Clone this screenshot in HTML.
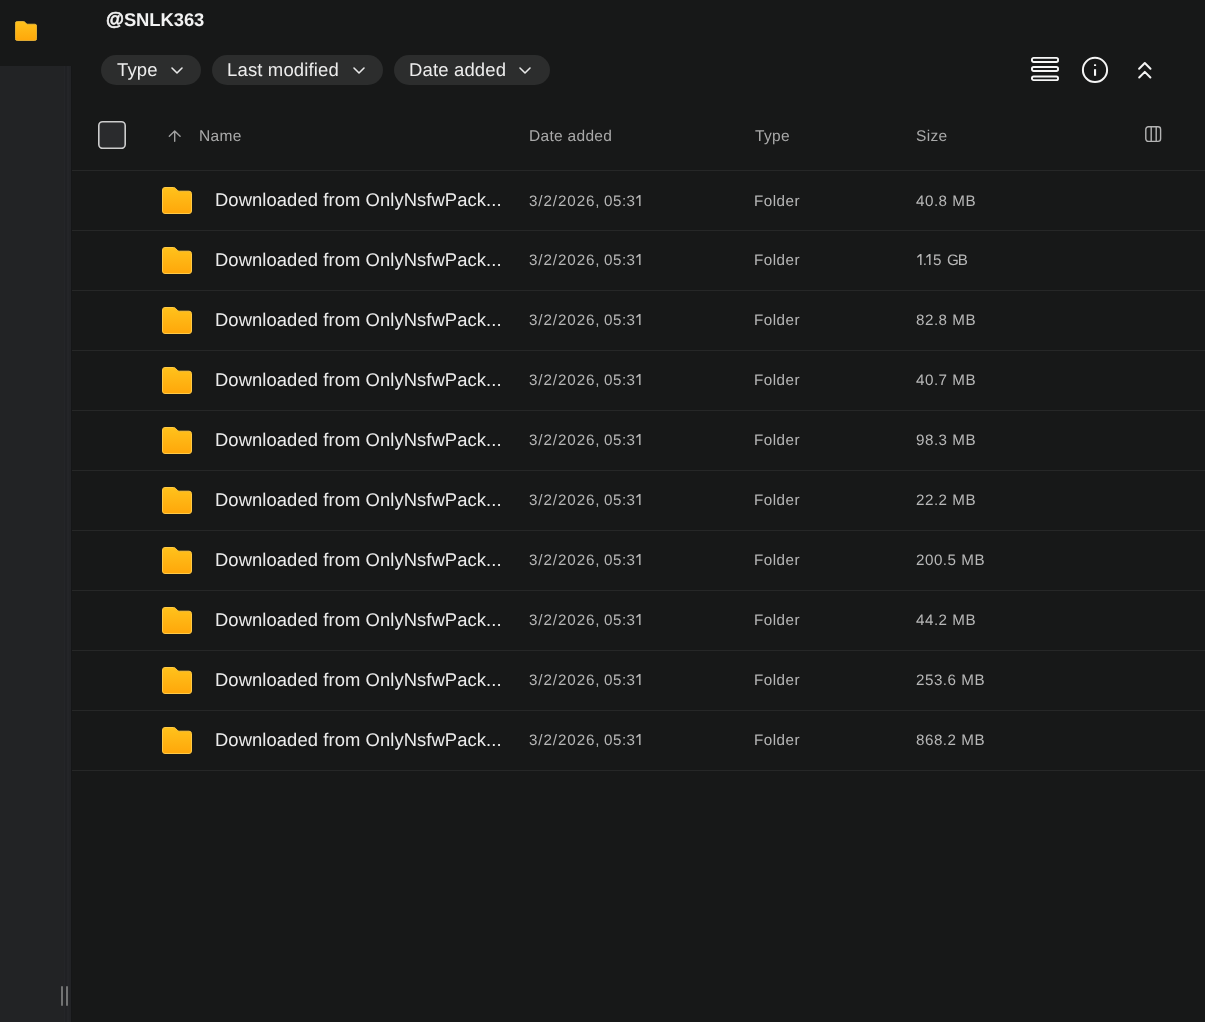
<!DOCTYPE html>
<html><head><meta charset="utf-8">
<style>
html,body{-webkit-font-smoothing:antialiased;text-rendering:geometricPrecision;margin:0;padding:0;width:1205px;height:1022px;overflow:hidden;background:#171818;font-family:"Liberation Sans",sans-serif;}
.a{position:absolute;white-space:nowrap;will-change:transform;}
#side{position:absolute;left:0;top:66px;width:71px;height:956px;background:#222325;}
#strip{position:absolute;left:64px;top:66px;width:7px;height:956px;background:#242528;}
.grip{position:absolute;top:986px;width:2.4px;height:20px;background:#727373;border-radius:1px;}
#title{left:105.5px;top:7.5px;font-size:18.4px;font-weight:bold;color:#f2f2f2;line-height:24px;letter-spacing:-0.05px;}
.chip{position:absolute;top:55px;height:30px;border-radius:15px;background:#2c2d2d;}
.chip span{will-change:transform;position:absolute;left:16px;top:0;line-height:30px;font-size:18.5px;letter-spacing:0.15px;color:#ececec;white-space:nowrap;}
.chip svg{position:absolute;top:12px;}
.hdr{font-size:15.5px;color:#a9a9a9;letter-spacing:0.3px;line-height:20px;top:127px;}
.sep{position:absolute;left:72px;width:1133px;height:1px;background:#262727;}
.name{left:214.8px;font-size:18.4px;color:#ececec;letter-spacing:0.08px;line-height:24px;}
.cell{font-size:15.2px;color:#b7b7b7;letter-spacing:0.5px;line-height:20px;}
.fold{position:absolute;left:162px;}
.one{vertical-align:baseline;}
</style></head><body>
<div id="side"></div>
<div id="strip"></div><div class="a" style="left:65px;top:66px;width:1.5px;height:956px;background:#202124"></div><div class="a" style="left:69px;top:66px;width:2px;height:956px;background:#222326"></div><div class="a" style="left:71px;top:66px;width:1px;height:956px;background:#151617"></div>
<div class="grip" style="left:61px"></div>
<div class="grip" style="left:66px"></div>
<svg class="a" style="left:15px;top:21px" width="22" height="20" viewBox="0 0 30 27">
<defs><linearGradient id="g0" x1="0" y1="0" x2="0" y2="1"><stop offset="0" stop-color="#FFC21C"/><stop offset="1" stop-color="#FFA70A"/></linearGradient></defs>
<path d="M3,0.5 H11.4 Q12.8,0.5 13.7,1.5 L15.3,3.3 Q16.1,4.2 17.3,4.2 H27 Q29.5,4.2 29.5,6.7 V24 Q29.5,26.5 27,26.5 H3 Q0.5,26.5 0.5,24 V3 Q0.5,0.5 3,0.5 Z" fill="url(#g0)" stroke="#FFC945" stroke-width="1"/>
</svg>
<div id="title" class="a"><span style="-webkit-text-stroke:0.6px #f2f2f2;position:relative;top:-1px">@</span>SNLK363</div>
<div class="chip" style="left:101px;width:100px"><span>Type</span><svg style="left:70px" width="12" height="7" viewBox="0 0 12 7"><path d="M1,1 L6,6 L11,1" fill="none" stroke="#e8e8e8" stroke-width="1.55" stroke-linecap="round" stroke-linejoin="round"/></svg></div>
<div class="chip" style="left:212px;width:171px"><span style="left:15px">Last modified</span><svg style="left:141px" width="12" height="7" viewBox="0 0 12 7"><path d="M1,1 L6,6 L11,1" fill="none" stroke="#e8e8e8" stroke-width="1.55" stroke-linecap="round" stroke-linejoin="round"/></svg></div>
<div class="chip" style="left:394px;width:156px"><span style="left:14.5px">Date added</span><svg style="left:125px" width="12" height="7" viewBox="0 0 12 7"><path d="M1,1 L6,6 L11,1" fill="none" stroke="#e8e8e8" stroke-width="1.55" stroke-linecap="round" stroke-linejoin="round"/></svg></div>
<svg class="a" style="left:1030px;top:56px" width="30" height="26" viewBox="0 0 30 26" fill="none" stroke="#f6f6f6" stroke-width="1.9">
<rect x="1.95" y="1.9" width="26.1" height="4.1" rx="1.7"/>
<rect x="1.95" y="11" width="26.1" height="4" rx="1.7"/>
<rect x="1.95" y="20.5" width="26.1" height="3.6" rx="1.7"/>
</svg>
<svg class="a" style="left:1081px;top:56px" width="28" height="28" viewBox="0 0 28 28" fill="none" stroke="#f6f6f6" stroke-width="2">
<circle cx="14" cy="13.9" r="12.1"/>
<line x1="14.05" y1="13.2" x2="14.05" y2="19.8" stroke-width="2.1"/>
<line x1="14.05" y1="8.3" x2="14.05" y2="10" stroke-width="2.1"/>
</svg>
<svg class="a" style="left:1136px;top:60px" width="18" height="20" viewBox="0 0 18 20" fill="none" stroke="#f4f4f4" stroke-width="2" stroke-linecap="round" stroke-linejoin="round">
<path d="M3.1,8.7 L8.8,3 L14.5,8.7"/>
<path d="M3.2,17.5 L8.8,11.9 L14.4,17.5"/>
</svg>
<svg class="a" style="left:98px;top:121px" width="28" height="28" viewBox="0 0 28 28"><rect x="0.8" y="0.8" width="26.4" height="26.6" rx="3.8" fill="#2a2b2d" stroke="#cdcdcd" stroke-width="1.6"/></svg>
<svg class="a" style="left:167px;top:129px" width="15" height="14" viewBox="0 0 15 14" fill="none" stroke="#a0a0a0" stroke-width="1.4" stroke-linecap="round" stroke-linejoin="round">
<path d="M7.7,12.3 V2.2 M2.3,7.3 L7.7,1.9 L13.1,7.3"/>
</svg>
<div class="a hdr" style="left:199px">Name</div>
<div class="a hdr" style="left:529px">Date added</div>
<div class="a hdr" style="left:755px">Type</div>
<div class="a hdr" style="left:916px">Size</div>
<svg class="a" style="left:1145px;top:126.3px" width="17" height="17" viewBox="0 0 17 17" fill="none" stroke="#b4b4b4" stroke-width="1.4">
<rect x="0.8" y="0.8" width="14.8" height="14.6" rx="2.6"/>
<line x1="6.2" y1="1" x2="6.2" y2="15.5"/>
<line x1="11.2" y1="1" x2="11.2" y2="15.5"/>
</svg>
<div class="sep" style="top:170px"></div>
<svg class="a fold" style="top:187px" width="30" height="27" viewBox="0 0 30 27"><path d="M3,0.5 H11.4 Q12.8,0.5 13.7,1.5 L15.3,3.3 Q16.1,4.2 17.3,4.2 H27 Q29.5,4.2 29.5,6.7 V24 Q29.5,26.5 27,26.5 H3 Q0.5,26.5 0.5,24 V3 Q0.5,0.5 3,0.5 Z" fill="url(#g0)" stroke="#FFC945" stroke-width="1"/></svg>
<div class="a name" style="top:188px">Downloaded from OnlyNsfwPack...</div>
<div class="a cell" style="left:529px;top:191.5px;letter-spacing:0.9px">3/2/2026,</div>
<div class="a cell" style="left:604px;top:191.5px">05:3<span style="margin-left:0px"></span><svg class="one" width="5" height="11" viewBox="0 0 5 11"><path d="M3.1,0 H4.55 V11 H3.1 V1.9 L0.35,3.9 V2.3 Z" fill="currentColor"/></svg></div>
<div class="a cell" style="left:754px;top:191.5px">Folder</div>
<div class="a cell" style="left:916px;top:191.5px">40.8 MB</div>
<div class="sep" style="top:230px"></div>
<svg class="a fold" style="top:247px" width="30" height="27" viewBox="0 0 30 27"><path d="M3,0.5 H11.4 Q12.8,0.5 13.7,1.5 L15.3,3.3 Q16.1,4.2 17.3,4.2 H27 Q29.5,4.2 29.5,6.7 V24 Q29.5,26.5 27,26.5 H3 Q0.5,26.5 0.5,24 V3 Q0.5,0.5 3,0.5 Z" fill="url(#g0)" stroke="#FFC945" stroke-width="1"/></svg>
<div class="a name" style="top:248px">Downloaded from OnlyNsfwPack...</div>
<div class="a cell" style="left:529px;top:250.5px;letter-spacing:0.9px">3/2/2026,</div>
<div class="a cell" style="left:604px;top:250.5px">05:3<span style="margin-left:0px"></span><svg class="one" width="5" height="11" viewBox="0 0 5 11"><path d="M3.1,0 H4.55 V11 H3.1 V1.9 L0.35,3.9 V2.3 Z" fill="currentColor"/></svg></div>
<div class="a cell" style="left:754px;top:250.5px">Folder</div>
<div class="a cell" style="left:916px;top:250.5px"><span style="margin-left:0.5px"></span><svg class="one" width="5" height="11" viewBox="0 0 5 11"><path d="M3.1,0 H4.55 V11 H3.1 V1.9 L0.35,3.9 V2.3 Z" fill="currentColor"/></svg><span style="margin-left:1.2px">.</span><span style="margin-left:-1.0px"></span><svg class="one" width="5" height="11" viewBox="0 0 5 11"><path d="M3.1,0 H4.55 V11 H3.1 V1.9 L0.35,3.9 V2.3 Z" fill="currentColor"/></svg><span style="margin-left:1.5px">5</span><span style="letter-spacing:0;margin-left:1px"> G</span><span style="margin-left:-1.1px">B</span></div>
<div class="sep" style="top:290px"></div>
<svg class="a fold" style="top:307px" width="30" height="27" viewBox="0 0 30 27"><path d="M3,0.5 H11.4 Q12.8,0.5 13.7,1.5 L15.3,3.3 Q16.1,4.2 17.3,4.2 H27 Q29.5,4.2 29.5,6.7 V24 Q29.5,26.5 27,26.5 H3 Q0.5,26.5 0.5,24 V3 Q0.5,0.5 3,0.5 Z" fill="url(#g0)" stroke="#FFC945" stroke-width="1"/></svg>
<div class="a name" style="top:308px">Downloaded from OnlyNsfwPack...</div>
<div class="a cell" style="left:529px;top:310.5px;letter-spacing:0.9px">3/2/2026,</div>
<div class="a cell" style="left:604px;top:310.5px">05:3<span style="margin-left:0px"></span><svg class="one" width="5" height="11" viewBox="0 0 5 11"><path d="M3.1,0 H4.55 V11 H3.1 V1.9 L0.35,3.9 V2.3 Z" fill="currentColor"/></svg></div>
<div class="a cell" style="left:754px;top:310.5px">Folder</div>
<div class="a cell" style="left:916px;top:310.5px">82.8 MB</div>
<div class="sep" style="top:350px"></div>
<svg class="a fold" style="top:367px" width="30" height="27" viewBox="0 0 30 27"><path d="M3,0.5 H11.4 Q12.8,0.5 13.7,1.5 L15.3,3.3 Q16.1,4.2 17.3,4.2 H27 Q29.5,4.2 29.5,6.7 V24 Q29.5,26.5 27,26.5 H3 Q0.5,26.5 0.5,24 V3 Q0.5,0.5 3,0.5 Z" fill="url(#g0)" stroke="#FFC945" stroke-width="1"/></svg>
<div class="a name" style="top:368px">Downloaded from OnlyNsfwPack...</div>
<div class="a cell" style="left:529px;top:370.5px;letter-spacing:0.9px">3/2/2026,</div>
<div class="a cell" style="left:604px;top:370.5px">05:3<span style="margin-left:0px"></span><svg class="one" width="5" height="11" viewBox="0 0 5 11"><path d="M3.1,0 H4.55 V11 H3.1 V1.9 L0.35,3.9 V2.3 Z" fill="currentColor"/></svg></div>
<div class="a cell" style="left:754px;top:370.5px">Folder</div>
<div class="a cell" style="left:916px;top:370.5px">40.7 MB</div>
<div class="sep" style="top:410px"></div>
<svg class="a fold" style="top:427px" width="30" height="27" viewBox="0 0 30 27"><path d="M3,0.5 H11.4 Q12.8,0.5 13.7,1.5 L15.3,3.3 Q16.1,4.2 17.3,4.2 H27 Q29.5,4.2 29.5,6.7 V24 Q29.5,26.5 27,26.5 H3 Q0.5,26.5 0.5,24 V3 Q0.5,0.5 3,0.5 Z" fill="url(#g0)" stroke="#FFC945" stroke-width="1"/></svg>
<div class="a name" style="top:428px">Downloaded from OnlyNsfwPack...</div>
<div class="a cell" style="left:529px;top:430.5px;letter-spacing:0.9px">3/2/2026,</div>
<div class="a cell" style="left:604px;top:430.5px">05:3<span style="margin-left:0px"></span><svg class="one" width="5" height="11" viewBox="0 0 5 11"><path d="M3.1,0 H4.55 V11 H3.1 V1.9 L0.35,3.9 V2.3 Z" fill="currentColor"/></svg></div>
<div class="a cell" style="left:754px;top:430.5px">Folder</div>
<div class="a cell" style="left:916px;top:430.5px">98.3 MB</div>
<div class="sep" style="top:470px"></div>
<svg class="a fold" style="top:487px" width="30" height="27" viewBox="0 0 30 27"><path d="M3,0.5 H11.4 Q12.8,0.5 13.7,1.5 L15.3,3.3 Q16.1,4.2 17.3,4.2 H27 Q29.5,4.2 29.5,6.7 V24 Q29.5,26.5 27,26.5 H3 Q0.5,26.5 0.5,24 V3 Q0.5,0.5 3,0.5 Z" fill="url(#g0)" stroke="#FFC945" stroke-width="1"/></svg>
<div class="a name" style="top:488px">Downloaded from OnlyNsfwPack...</div>
<div class="a cell" style="left:529px;top:490.5px;letter-spacing:0.9px">3/2/2026,</div>
<div class="a cell" style="left:604px;top:490.5px">05:3<span style="margin-left:0px"></span><svg class="one" width="5" height="11" viewBox="0 0 5 11"><path d="M3.1,0 H4.55 V11 H3.1 V1.9 L0.35,3.9 V2.3 Z" fill="currentColor"/></svg></div>
<div class="a cell" style="left:754px;top:490.5px">Folder</div>
<div class="a cell" style="left:916px;top:490.5px">22.2 MB</div>
<div class="sep" style="top:530px"></div>
<svg class="a fold" style="top:547px" width="30" height="27" viewBox="0 0 30 27"><path d="M3,0.5 H11.4 Q12.8,0.5 13.7,1.5 L15.3,3.3 Q16.1,4.2 17.3,4.2 H27 Q29.5,4.2 29.5,6.7 V24 Q29.5,26.5 27,26.5 H3 Q0.5,26.5 0.5,24 V3 Q0.5,0.5 3,0.5 Z" fill="url(#g0)" stroke="#FFC945" stroke-width="1"/></svg>
<div class="a name" style="top:548px">Downloaded from OnlyNsfwPack...</div>
<div class="a cell" style="left:529px;top:550.5px;letter-spacing:0.9px">3/2/2026,</div>
<div class="a cell" style="left:604px;top:550.5px">05:3<span style="margin-left:0px"></span><svg class="one" width="5" height="11" viewBox="0 0 5 11"><path d="M3.1,0 H4.55 V11 H3.1 V1.9 L0.35,3.9 V2.3 Z" fill="currentColor"/></svg></div>
<div class="a cell" style="left:754px;top:550.5px">Folder</div>
<div class="a cell" style="left:916px;top:550.5px">200.5 MB</div>
<div class="sep" style="top:590px"></div>
<svg class="a fold" style="top:607px" width="30" height="27" viewBox="0 0 30 27"><path d="M3,0.5 H11.4 Q12.8,0.5 13.7,1.5 L15.3,3.3 Q16.1,4.2 17.3,4.2 H27 Q29.5,4.2 29.5,6.7 V24 Q29.5,26.5 27,26.5 H3 Q0.5,26.5 0.5,24 V3 Q0.5,0.5 3,0.5 Z" fill="url(#g0)" stroke="#FFC945" stroke-width="1"/></svg>
<div class="a name" style="top:608px">Downloaded from OnlyNsfwPack...</div>
<div class="a cell" style="left:529px;top:610.5px;letter-spacing:0.9px">3/2/2026,</div>
<div class="a cell" style="left:604px;top:610.5px">05:3<span style="margin-left:0px"></span><svg class="one" width="5" height="11" viewBox="0 0 5 11"><path d="M3.1,0 H4.55 V11 H3.1 V1.9 L0.35,3.9 V2.3 Z" fill="currentColor"/></svg></div>
<div class="a cell" style="left:754px;top:610.5px">Folder</div>
<div class="a cell" style="left:916px;top:610.5px">44.2 MB</div>
<div class="sep" style="top:650px"></div>
<svg class="a fold" style="top:667px" width="30" height="27" viewBox="0 0 30 27"><path d="M3,0.5 H11.4 Q12.8,0.5 13.7,1.5 L15.3,3.3 Q16.1,4.2 17.3,4.2 H27 Q29.5,4.2 29.5,6.7 V24 Q29.5,26.5 27,26.5 H3 Q0.5,26.5 0.5,24 V3 Q0.5,0.5 3,0.5 Z" fill="url(#g0)" stroke="#FFC945" stroke-width="1"/></svg>
<div class="a name" style="top:668px">Downloaded from OnlyNsfwPack...</div>
<div class="a cell" style="left:529px;top:670.5px;letter-spacing:0.9px">3/2/2026,</div>
<div class="a cell" style="left:604px;top:670.5px">05:3<span style="margin-left:0px"></span><svg class="one" width="5" height="11" viewBox="0 0 5 11"><path d="M3.1,0 H4.55 V11 H3.1 V1.9 L0.35,3.9 V2.3 Z" fill="currentColor"/></svg></div>
<div class="a cell" style="left:754px;top:670.5px">Folder</div>
<div class="a cell" style="left:916px;top:670.5px">253.6 MB</div>
<div class="sep" style="top:710px"></div>
<svg class="a fold" style="top:727px" width="30" height="27" viewBox="0 0 30 27"><path d="M3,0.5 H11.4 Q12.8,0.5 13.7,1.5 L15.3,3.3 Q16.1,4.2 17.3,4.2 H27 Q29.5,4.2 29.5,6.7 V24 Q29.5,26.5 27,26.5 H3 Q0.5,26.5 0.5,24 V3 Q0.5,0.5 3,0.5 Z" fill="url(#g0)" stroke="#FFC945" stroke-width="1"/></svg>
<div class="a name" style="top:728px">Downloaded from OnlyNsfwPack...</div>
<div class="a cell" style="left:529px;top:730.5px;letter-spacing:0.9px">3/2/2026,</div>
<div class="a cell" style="left:604px;top:730.5px">05:3<span style="margin-left:0px"></span><svg class="one" width="5" height="11" viewBox="0 0 5 11"><path d="M3.1,0 H4.55 V11 H3.1 V1.9 L0.35,3.9 V2.3 Z" fill="currentColor"/></svg></div>
<div class="a cell" style="left:754px;top:730.5px">Folder</div>
<div class="a cell" style="left:916px;top:730.5px">868.2 MB</div>
<div class="sep" style="top:770px"></div>
</body></html>
